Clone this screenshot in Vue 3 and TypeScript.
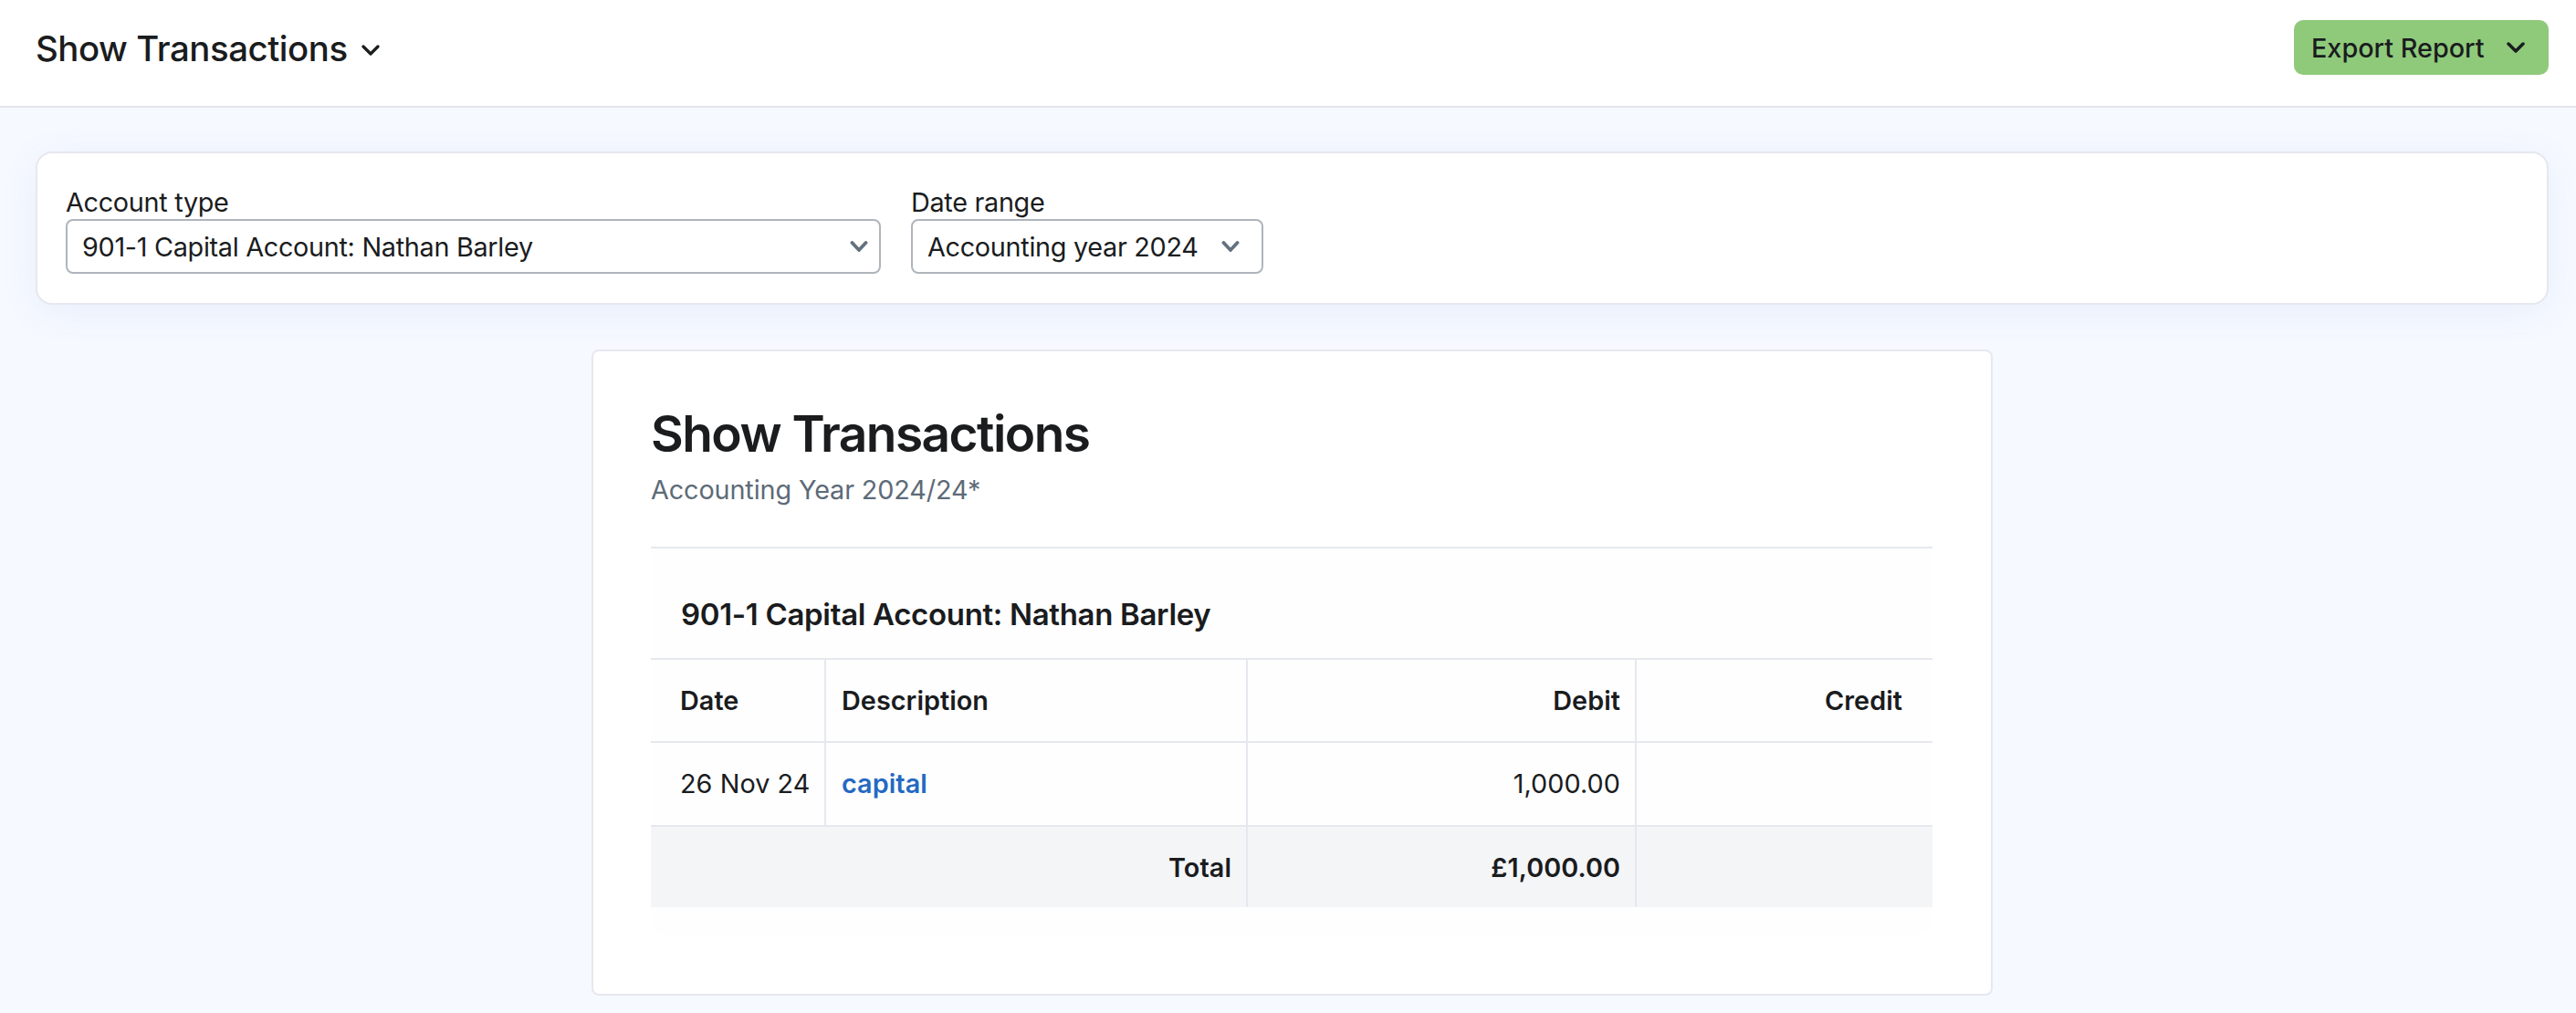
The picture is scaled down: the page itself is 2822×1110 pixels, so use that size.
<script setup lang="ts">
interface Row {
  date: string
  description: string
  debit: string
  credit: string
}

const rows: Row[] = [
  { date: "26 Nov 24", description: "capital", debit: "1,000.00", credit: "" },
]
const account = "901-1 Capital Account: Nathan Barley"
</script>

<template>
  <div class="page">
    <header class="topbar">
      <div class="page-title">
        <span>Show Transactions</span>
        <svg class="title-chevron" viewBox="0 0 20 12" fill="none">
          <path d="M2 2l8 8 8-8" />
        </svg>
      </div>
      <button class="export">
        <span>Export Report</span>
        <svg class="export-chevron" viewBox="0 0 20 12" fill="none">
          <path d="M2 2l8 8 8-8" />
        </svg>
      </button>
    </header>

    <main class="content">
      <section class="filters">
        <div class="field">
          <label>Account type</label>
          <div class="select account-select">
            <span>{{ account }}</span>
            <svg class="select-chevron" viewBox="0 0 20 12" fill="none">
              <path d="M2.5 2l7.5 8 7.5-8" />
            </svg>
          </div>
        </div>
        <div class="field">
          <label>Date range</label>
          <div class="select date-select">
            <span>Accounting year 2024</span>
            <svg class="select-chevron" viewBox="0 0 20 12" fill="none">
              <path d="M2.5 2l7.5 8 7.5-8" />
            </svg>
          </div>
        </div>
      </section>

      <article class="report">
        <div class="report-head">
          <h1>Show Transactions</h1>
          <p>Accounting Year 2024/24*</p>
        </div>
        <div class="ledger">
          <h2>{{ account }}</h2>
          <table>
            <colgroup>
              <col class="col-date" />
              <col class="col-desc" />
              <col class="col-debit" />
              <col />
            </colgroup>
            <thead>
              <tr>
                <th>Date</th>
                <th>Description</th>
                <th class="num">Debit</th>
                <th class="num">Credit</th>
              </tr>
            </thead>
            <tbody>
              <tr v-for="row in rows" :key="row.date">
                <td>{{ row.date }}</td>
                <td><a href="#">{{ row.description }}</a></td>
                <td class="num">{{ row.debit }}</td>
                <td class="num">{{ row.credit }}</td>
              </tr>
            </tbody>
            <tfoot>
              <tr>
                <td colspan="2" class="num">Total</td>
                <td class="num">£1,000.00</td>
                <td></td>
              </tr>
            </tfoot>
          </table>
        </div>
      </article>
    </main>
  </div>
</template>

<style>
html,
body {
  margin: 0;
  background: #f6f9ff;
}
</style>

<style scoped>
.page {
  min-height: 1110px;
  box-sizing: border-box;
  font-family: Inter, "Liberation Sans", sans-serif;
  font-size: 28.8px;
  letter-spacing: -0.3px;
  color: #1a1c1e;
  background: #f6f9ff;
}

.topbar {
  display: flex;
  align-items: center;
  justify-content: space-between;
  box-sizing: border-box;
  height: 118px;
  padding: 0 30px 12px 39px;
  background: #fff;
  border-bottom: 2px solid #e3e6ec;
}

.page-title {
  display: flex;
  align-items: center;
  gap: 15px;
  margin-top: 2px;
  font-size: 38.4px;
  font-weight: 500;
  letter-spacing: -0.45px;
}

.title-chevron {
  width: 20px;
  height: 12px;
  margin-top: 4px;
}

.title-chevron path {
  stroke: #1a1c1e;
  stroke-width: 3.2;
  stroke-linecap: round;
  stroke-linejoin: round;
}

.export {
  display: flex;
  align-items: center;
  justify-content: space-between;
  width: 279px;
  height: 60px;
  padding: 0 26px 0 19px;
  border: none;
  border-radius: 10px;
  background: #8fca7b;
  font: inherit;
  font-weight: 500;
  letter-spacing: 0;
  color: #1a1c1e;
}

.export-chevron {
  width: 20px;
  height: 12px;
}

.export-chevron path {
  stroke: #1a1c1e;
  stroke-width: 3.5;
  stroke-linecap: round;
  stroke-linejoin: round;
}

.content {
  padding: 48px 30px 0 39px;
}

.filters {
  display: flex;
  gap: 33px;
  box-sizing: border-box;
  height: 168px;
  padding: 32px 31px;
  background: #fff;
  border: 2px solid #e6e8ef;
  border-radius: 18px;
  box-shadow: 0 8px 40px rgba(80, 110, 200, 0.08);
}

.field {
  display: flex;
  flex-direction: column;
}

.field label {
  height: 40px;
  line-height: 44px;
}

.select {
  display: flex;
  align-items: center;
  justify-content: space-between;
  box-sizing: border-box;
  height: 60px;
  padding: 0 12px 0 16px;
  background: #fff;
  border: 2px solid #afb5bc;
  border-radius: 8px;
}

.account-select {
  width: 893px;
}

.date-select {
  width: 386px;
  padding-right: 24px;
}

.select-chevron {
  width: 20px;
  height: 12px;
}

.select-chevron path {
  stroke: #64727f;
  stroke-width: 3.8;
  stroke-linecap: round;
  stroke-linejoin: round;
}

.report {
  box-sizing: border-box;
  width: 1535px;
  height: 708px;
  margin: 49px auto 0;
  padding: 0 64px 0 63px;
  background: #fff;
  border: 2px solid #e6e8ef;
  border-radius: 8px;
}

.report-head {
  height: 216px;
  box-sizing: border-box;
  padding-top: 53px;
  border-bottom: 2px solid #e6e8ef;
}

.report-head h1 {
  margin: 0;
  font-size: 55px;
  line-height: 74px;
  font-weight: 600;
  letter-spacing: -1.55px;
}

.report-head p {
  margin: 5px 0 0;
  line-height: 40px;
  letter-spacing: -0.12px;
  color: #5d6b78;
}

.ledger {
  padding-bottom: 31px;
  border-radius: 0 0 18px 18px;
  background: #fefefe;
}

.ledger h2 {
  margin: 0;
  height: 120px;
  box-sizing: border-box;
  padding-left: 33px;
  font-size: 33px;
  line-height: 145px;
  font-weight: 600;
  letter-spacing: -0.33px;
}

table {
  width: 100%;
  table-layout: fixed;
  border-collapse: collapse;
  letter-spacing: 0.05px;
}

.col-date {
  width: 191px;
}

.col-desc {
  width: 462px;
}

.col-debit {
  width: 426px;
}

th,
td {
  height: 91px;
  box-sizing: border-box;
  padding: 0 16px 0 17px;
  border: 2px solid #e6e8ef;
  text-align: left;
  font-weight: 400;
}

th {
  font-weight: 600;
}

tbody td {
  height: 92px;
  padding-bottom: 2px;
}

th:first-child,
tbody td:first-child {
  padding-left: 32px;
  padding-right: 0;
  border-left: none;
}

th:last-child,
td:last-child {
  padding-right: 33px;
  border-right: none;
}

tfoot tr {
  background: #f4f5f7;
}

tfoot td {
  height: 89px;
  font-weight: 600;
  border-bottom: none;
}

tfoot td:first-child {
  border-left: none;
}

.num {
  text-align: right;
}

a {
  color: #2469c2;
  font-weight: 600;
  text-decoration: none;
}
</style>
